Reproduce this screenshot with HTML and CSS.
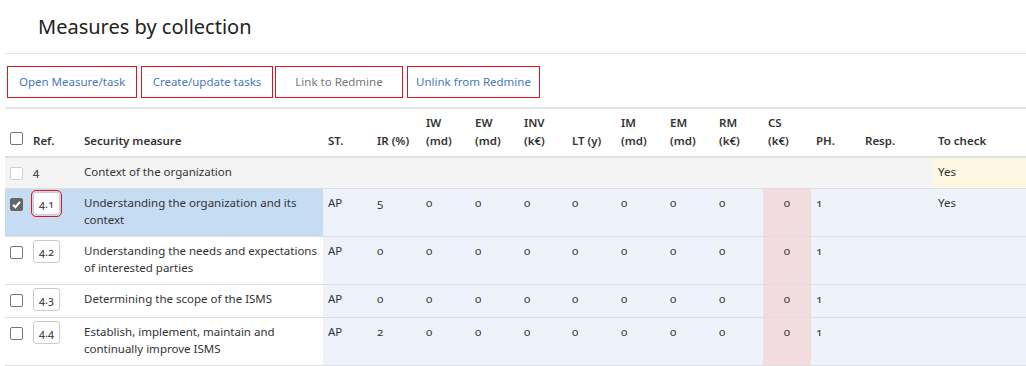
FILE: index.html
```html
<!DOCTYPE html>
<html lang="en">
<head>
    <meta charset="UTF-8">
    <title>Measures by collection</title>
    <link rel="stylesheet" href="styles.css">
</head>
<body>

<div class="page">
    <div class="page-header">
        <h2>Measures by collection</h2>
    </div>

    <div class="toolbar">
        <a class="btn btn-open">Open Measure/task</a>
        <a class="btn btn-tasks">Create/update tasks</a>
        <a class="btn btn-link btn-muted">Link to Redmine</a>
        <a class="btn btn-unlink">Unlink from Redmine</a>
    </div>

    <table class="measures">
        <colgroup>
            <col class="c-cb">
            <col class="c-ref">
            <col class="c-measure">
            <col class="c-val">
            <col class="c-val">
            <col class="c-val">
            <col class="c-val">
            <col class="c-val-s">
            <col class="c-val">
            <col class="c-val">
            <col class="c-val">
            <col class="c-val">
            <col class="c-val-s">
            <col class="c-val">
            <col class="c-resp">
            <col class="c-check">
        </colgroup>
        <thead>
            <tr>
                <th><input type="checkbox" class="cb"></th>
                <th>Ref.</th>
                <th>Security measure</th>
                <th>ST.</th>
                <th>IR (%)</th>
                <th>IW<br>(md)</th>
                <th>EW<br>(md)</th>
                <th>INV<br>(k€)</th>
                <th>LT (y)</th>
                <th>IM<br>(md)</th>
                <th>EM<br>(md)</th>
                <th>RM<br>(k€)</th>
                <th>CS<br>(k€)</th>
                <th>PH.</th>
                <th>Resp.</th>
                <th>To check</th>
            </tr>
        </thead>
        <tbody>
            <tr class="group">
                <td><input type="checkbox" class="cb" disabled></td>
                <td class="num">4</td>
                <td>Context of the organization</td>
                <td></td><td></td><td></td><td></td><td></td><td></td>
                <td></td><td></td><td></td><td></td><td></td><td></td>
                <td class="check">Yes</td>
            </tr>
            <tr class="selected">
                <td><input type="checkbox" class="cb" checked></td>
                <td><span class="ref ref-hl">4.1</span></td>
                <td>Understanding the organization and its context</td>
                <td class="data">AP</td>
                <td class="data num">5</td>
                <td class="data num">0</td>
                <td class="data num">0</td>
                <td class="data num">0</td>
                <td class="data num">0</td>
                <td class="data num">0</td>
                <td class="data num">0</td>
                <td class="data num">0</td>
                <td class="cost num">0</td>
                <td class="data num">1</td>
                <td class="data"></td>
                <td class="data">Yes</td>
            </tr>
            <tr>
                <td><input type="checkbox" class="cb"></td>
                <td><span class="ref">4.2</span></td>
                <td>Understanding the needs and expectations of interested parties</td>
                <td class="data">AP</td>
                <td class="data num">0</td>
                <td class="data num">0</td>
                <td class="data num">0</td>
                <td class="data num">0</td>
                <td class="data num">0</td>
                <td class="data num">0</td>
                <td class="data num">0</td>
                <td class="data num">0</td>
                <td class="cost num">0</td>
                <td class="data num">1</td>
                <td class="data"></td>
                <td class="data"></td>
            </tr>
            <tr>
                <td><input type="checkbox" class="cb"></td>
                <td><span class="ref">4.3</span></td>
                <td>Determining the scope of the ISMS</td>
                <td class="data">AP</td>
                <td class="data num">0</td>
                <td class="data num">0</td>
                <td class="data num">0</td>
                <td class="data num">0</td>
                <td class="data num">0</td>
                <td class="data num">0</td>
                <td class="data num">0</td>
                <td class="data num">0</td>
                <td class="cost num">0</td>
                <td class="data num">1</td>
                <td class="data"></td>
                <td class="data"></td>
            </tr>
            <tr>
                <td><input type="checkbox" class="cb"></td>
                <td><span class="ref">4.4</span></td>
                <td>Establish, implement, maintain and continually improve ISMS</td>
                <td class="data">AP</td>
                <td class="data num">2</td>
                <td class="data num">0</td>
                <td class="data num">0</td>
                <td class="data num">0</td>
                <td class="data num">0</td>
                <td class="data num">0</td>
                <td class="data num">0</td>
                <td class="data num">0</td>
                <td class="cost num">0</td>
                <td class="data num">1</td>
                <td class="data"></td>
                <td class="data"></td>
            </tr>
        </tbody>
    </table>
</div>

</body>
</html>
```

FILE: styles.css
```css
body {
    margin: 0;
    font-family: "Noto Sans", "Open Sans", sans-serif;
    font-size: 11.5px;
    color: #333;
    background: #fff;
    overflow: hidden;
}

.page {
    margin-left: 5px;
    width: 1021px;
}

.page-header {
    height: 54px;
    border-bottom: 1px solid #e5e5e5;
    padding-left: 33px;
    box-sizing: border-box;
}

.page-header h2 {
    margin: 0;
    padding-top: 13px;
    font-size: 20px;
    font-weight: normal;
    color: #222;
}

.toolbar {
    display: flex;
    align-items: center;
    height: 55px;
    box-sizing: border-box;
    padding: 2px 0 0 2px;
    border-bottom: 2px solid #e5e5e5;
}

.btn {
    display: block;
    box-sizing: border-box;
    height: 32px;
    line-height: 30px;
    margin-right: 4px;
    border: 1px solid #e3141f;
    color: #4a78bd;
    font-size: 11.5px;
    text-align: center;
    white-space: nowrap;
    cursor: pointer;
}

.btn-open { width: 130px; }
.btn-tasks { width: 132px; margin-right: 2px; }
.btn-link { width: 128px; }
.btn-unlink { width: 133px; }

.btn-muted {
    color: #777;
}

.measures {
    border-collapse: collapse;
    table-layout: fixed;
    width: 1021px;
}

.c-cb { width: 23px; }
.c-ref { width: 51px; }
.c-measure { width: 244px; }
.c-val { width: 49px; }
.c-val-s { width: 48px; }
.c-resp { width: 73px; }
.c-check { width: 93px; }

.measures th {
    text-align: left;
    vertical-align: bottom;
    font-weight: 600;
    padding: 5px 5px 6px 5px;
    line-height: 18px;
    height: 36px;
    border-bottom: 2px solid #e0e0e0;
    white-space: nowrap;
}

.measures td {
    vertical-align: top;
    padding: 5px 5px 8px 5px;
    line-height: 17px;
    border-bottom: 1px solid #dedede;
}

.measures th:first-child,
.measures td:first-child {
    padding-left: 5px;
    padding-right: 0;
}

.num {
    font-variant-numeric: oldstyle-nums;
}

.cb {
    appearance: none;
    box-sizing: border-box;
    width: 13px;
    height: 13px;
    margin: 4px 0 0 0;
    border: 1px solid #767676;
    border-radius: 2px;
    background: #fff;
    vertical-align: top;
}

.cb:disabled {
    border-color: #cfcfcf;
}

.cb:checked {
    background: #666 url("data:image/svg+xml,%3Csvg xmlns='http://www.w3.org/2000/svg' viewBox='0 0 13 13'%3E%3Cpath d='M3 6.8l2.4 2.4 4.6-5.4' fill='none' stroke='%23fff' stroke-width='2'/%3E%3C/svg%3E") center/13px no-repeat;
    border-color: #666;
}

.measures th .cb {
    margin: 0 0 2px 0;
}

.group td {
    background: #f4f4f4;
}

.group td.check {
    background: #fdf6e1;
}

.selected td {
    background: #c6dcf3;
}

.measures td.data {
    background: #eef3fb;
}

.measures td.cost {
    background: #f2dcdf;
    text-align: center;
}

.ref {
    display: inline-block;
    box-sizing: border-box;
    min-width: 27px;
    height: 23px;
    line-height: 21px;
    padding: 0 5px;
    margin: -2px 0;
    border: 1px solid #ccc;
    border-radius: 3px;
    background: #fff;
    font-size: 11px;
    text-align: center;
    vertical-align: top;
    font-variant-numeric: oldstyle-nums;
}

.ref-hl {
    outline: 1px solid #e3141f;
    outline-offset: 1px;
}
```
